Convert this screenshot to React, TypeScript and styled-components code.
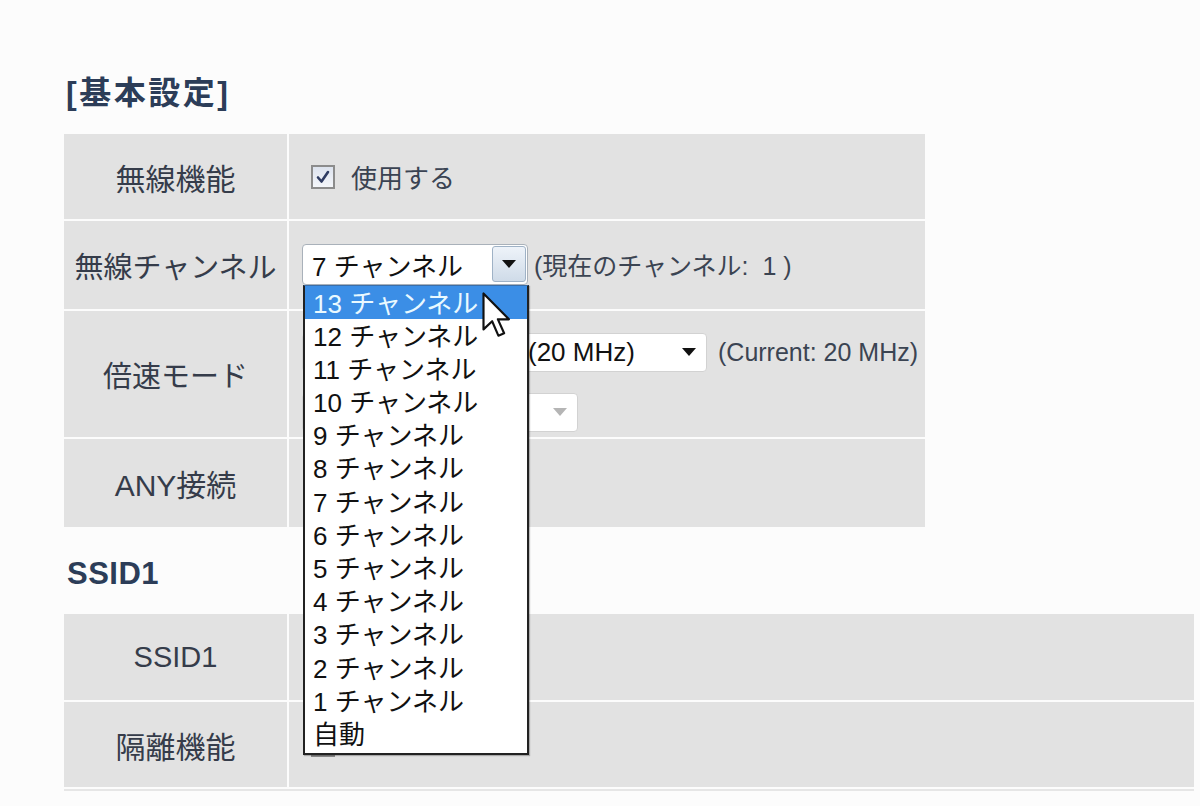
import React from "react";
import styled, { createGlobalStyle } from "styled-components";

const GlobalStyle = createGlobalStyle`
  body {
    margin: 0;
    background: #fcfcfc;
    font-family: "Liberation Sans", "Noto Sans CJK JP", sans-serif;
  }
`;

const channels = [13, 12, 11, 10, 9, 8, 7, 6, 5, 4, 3, 2, 1];

function App() {
    return (
        <Page>
            <GlobalStyle />
            <SectionTitle>[基本設定]</SectionTitle>
            <Table $width={861} $rows="85px 88px 126px 88px">
                <Label>無線機能</Label>
                <Value>
                    <CheckRow>
                        <CheckBox />
                        <span>使用する</span>
                    </CheckRow>
                </Value>

                <Label $narrow>無線チャンネル</Label>
                <Value $raised>
                    <SelectWrap>
                        <Select $width={226}>
                            <span>7 チャンネル</span>
                            <ArrowButton>
                                <Triangle />
                            </ArrowButton>
                        </Select>
                        <DropList>
                            {channels.map((n) => (
                                <Option key={n} $selected={n === 13}>
                                    {n} チャンネル
                                </Option>
                            ))}
                            <Option>自動</Option>
                            <Cursor viewBox="0 0 12 20">
                                <path
                                    d="M1 1 L1 16 L4.6 12.6 L7.2 18.6 L9.6 17.6 L7 11.8 L11.6 11.8 Z"
                                    fill="#fff"
                                    stroke="#111"
                                    strokeWidth="0.9"
                                    strokeLinejoin="round"
                                />
                            </Cursor>
                        </DropList>
                    </SelectWrap>
                    <Note>(現在のチャンネル:&nbsp; 1 )</Note>
                </Value>

                <Label $narrow>倍速モード</Label>
                <Value $stack>
                    <Line>
                        <Select $width={405} $plain $indent={225}>
                            <span>(20 MHz)</span>
                            <Triangle />
                        </Select>
                        <Note $latin>(Current: 20 MHz)</Note>
                    </Line>
                    <Line>
                        <Select $width={276} $plain $indent={0}>
                            <span />
                            <Triangle $muted />
                        </Select>
                    </Line>
                </Value>

                <Label>ANY接続</Label>
                <Value />
            </Table>

            <SubTitle>SSID1</SubTitle>
            <Table $width={1130} $rows="86px 85px">
                <Label $narrow>SSID1</Label>
                <Value />
                <Label>隔離機能</Label>
                <Value>
                    <CheckRow>
                        <CheckBox $empty />
                    </CheckRow>
                </Value>
            </Table>
            <Rule />
        </Page>
    );
}

function CheckBox({ $empty }: { $empty?: boolean }) {
    return (
        <Box>
            {!$empty && (
                <svg width="16" height="16" viewBox="0 0 16 16">
                    <path
                        d="M3 8.5 L6.5 12.5 L13 3"
                        fill="none"
                        stroke="#2f3c63"
                        strokeWidth="2.6"
                        strokeLinecap="round"
                        strokeLinejoin="round"
                    />
                </svg>
            )}
        </Box>
    );
}

const Page = styled.div`
    padding: 74px 0 0 64px;
    color: #343b49;
`;

const SectionTitle = styled.h2`
    margin: 0 0 20px;
    padding-left: 2px;
    height: 40px;
    line-height: 38px;
    font-size: 32px;
    font-weight: 700;
    color: #2c3d58;
    letter-spacing: 2.5px;
`;

const SubTitle = styled(SectionTitle)`
    margin: 28px 0 19px;
    padding-left: 3px;
    font-size: 31px;
    letter-spacing: 0.5px;
`;

const Table = styled.div<{ $width: number; $rows: string }>`
    display: grid;
    grid-template-columns: 223px 1fr;
    grid-template-rows: ${(p) => p.$rows};
    gap: 2px;
    width: ${(p) => p.$width}px;
`;

const Label = styled.div<{ $narrow?: boolean }>`
    background: #e2e2e2;
    display: flex;
    align-items: center;
    justify-content: center;
    font-size: ${(p) => (p.$narrow ? "29px" : "30px")};
    color: #353c4a;
`;

const Value = styled.div<{ $stack?: boolean; $raised?: boolean }>`
    background: #e2e2e2;
    display: flex;
    flex-direction: ${(p) => (p.$stack ? "column" : "row")};
    justify-content: ${(p) => (p.$stack ? "center" : "flex-start")};
    align-items: ${(p) => (p.$stack ? "flex-start" : "center")};
    gap: ${(p) => (p.$stack ? "21px" : "6px")};
    padding: ${(p) => (p.$stack ? "16px 0 0 13px" : p.$raised ? "0 0 2px 13px" : "0 0 0 13px")};
    position: relative;
    font-size: 26px;
`;

const CheckRow = styled.label`
    display: flex;
    align-items: center;
    gap: 16px;
    margin-left: 9px;
    color: #3a4352;
    font-size: 26px;
`;

const Box = styled.span`
    width: 24px;
    height: 24px;
    box-sizing: border-box;
    border: 2px solid #8c8c8c;
    background: linear-gradient(#dde3ee, #f4f6fa);
    display: flex;
    align-items: center;
    justify-content: center;
`;

const SelectWrap = styled.div`
    position: relative;
    z-index: 2;
`;

const Select = styled.div<{ $width: number; $plain?: boolean; $indent?: number }>`
    width: ${(p) => p.$width}px;
    height: ${(p) => (p.$plain ? 39 : 41)}px;
    box-sizing: border-box;
    background: #fff;
    border: 1px solid ${(p) => (p.$plain ? "#d2d2d2" : "#a9b1ba")};
    border-radius: 4px;
    display: flex;
    align-items: center;
    justify-content: space-between;
    padding: ${(p) => (p.$plain ? `0 10px 0 ${p.$indent}px` : "0 1px 0 9px")};
    font-size: 26px;
    color: #111;
    white-space: nowrap;
`;

const ArrowButton = styled.span`
    width: 34px;
    height: 36px;
    box-sizing: border-box;
    border: 1px solid #9fb2c6;
    border-radius: 3px;
    background: linear-gradient(#eef3f9, #cfdbe8);
    display: flex;
    align-items: center;
    justify-content: center;
`;

const Triangle = styled.span<{ $muted?: boolean }>`
    width: 0;
    height: 0;
    border-left: 7px solid transparent;
    border-right: 7px solid transparent;
    border-top: 8px solid ${(p) => (p.$muted ? "#b5b5b5" : "#111")};
`;

const DropList = styled.div`
    position: absolute;
    top: 100%;
    left: 1px;
    width: 226px;
    box-sizing: border-box;
    padding-bottom: 3px;
    background: #fff;
    border: 2px solid #222;
    border-top: 1px solid #3a6ea8;
    box-shadow: 1px 1px 1px rgba(0, 0, 0, 0.25);
`;

const Option = styled.div<{ $selected?: boolean }>`
    height: 33.2px;
    line-height: 37px;
    overflow: visible;
    padding-left: 8px;
    font-size: 26px;
    white-space: nowrap;
    color: ${(p) => (p.$selected ? "#e9f9ff" : "#111")};
    background: ${(p) => (p.$selected ? "#3b8ee6" : "transparent")};
`;

const Cursor = styled.svg`
    position: absolute;
    left: 176px;
    top: 5px;
    width: 29px;
    height: 48px;
`;

const Note = styled.span<{ $latin?: boolean }>`
    font-size: 25px;
    color: #3b4452;
    white-space: nowrap;
    margin-left: ${(p) => (p.$latin ? "11px" : "0")};
`;

const Line = styled.div`
    display: flex;
    align-items: center;
`;

const Rule = styled.div`
    width: 1130px;
    height: 2px;
    margin-top: 2px;
    background: #e6e6e6;
`;

export default App;
